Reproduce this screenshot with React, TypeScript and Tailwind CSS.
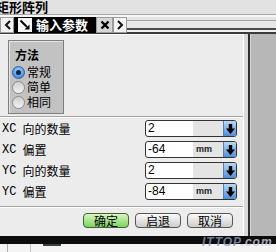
import React from 'react';

const cjk = "font-['Noto_Sans_CJK_SC','Noto_Sans',sans-serif]";

const rows = [
  { axis: 'XC', label: '向的数量', value: '2', unit: '' },
  { axis: 'XC', label: '偏置', value: '-64', unit: 'mm' },
  { axis: 'YC', label: '向的数量', value: '2', unit: '' },
  { axis: 'YC', label: '偏置', value: '-84', unit: 'mm' },
];

function DownArrow() {
  return (
    <svg width="9" height="10" viewBox="0 0 9 10">
      <path d="M2.8 0h3.4v4.6H9L4.5 10 0 4.6h2.8z" fill="#000" />
    </svg>
  );
}

function Radio({ checked, label }: { checked?: boolean; label: string }) {
  return (
    <div className="h-[15px] flex items-center pl-[3px]">
      {checked ? (
        <div className="w-[13px] h-[13px] rounded-full border border-[#2d5f99] bg-[radial-gradient(circle_at_50%_35%,#9fd0ff,#2f78d0)] flex items-center justify-center">
          <div className="w-[5px] h-[5px] rounded-full bg-[#0b2448]" />
        </div>
      ) : (
        <div className="w-[13px] h-[13px] rounded-full border border-[#8c8c8c] bg-[linear-gradient(#cfcfcf,#f2f2f2)]" />
      )}
      <span className="ml-[2px] text-[12px] leading-[14px] font-['Liberation_Sans','Noto_Sans_CJK_SC',sans-serif] text-black">
        {label}
      </span>
    </div>
  );
}

function ValueBox({ value, unit }: { value: string; unit: string }) {
  return (
    <div className="w-[92px] h-[17px] rounded-[3px] border border-[#333] bg-white flex overflow-hidden">
      <div className="w-[47px] pl-[2px] text-[12px] leading-[15px] font-['Liberation_Sans',sans-serif] text-black">{value}</div>
      <div className="w-[30px] bg-[#e4e4e4] flex items-center pl-[3px] text-[9px] font-bold font-['Liberation_Sans',sans-serif] text-[#222]">
        {unit}
      </div>
      <div className="w-[13px] border-l border-[#5a7fa8] bg-[linear-gradient(#b8d8f6,#4f8fd6)] flex items-center justify-center">
        <DownArrow />
      </div>
    </div>
  );
}

export default function App() {
  return (
    <div className={`w-[276px] h-[252px] bg-[#e2e2e2] overflow-hidden flex flex-col relative ${cjk}`}>
      {/* title */}
      <div className="h-[14px] flex items-center">
        <span className="-ml-[4px] text-[13px] leading-[14px] font-bold text-black">矩形阵列</span>
      </div>
      <div className="h-[3px] border-t border-[#a6a6a6] bg-[#f6f6f6]" />

      {/* tab row */}
      <div className="h-[16px] flex">
        <div className="w-[14px] bg-[#f2f2f2] border border-[#9a9a9a] flex items-center justify-center">
          <svg width="7" height="10" viewBox="0 0 7 10">
            <path d="M6 1L2 5l4 4" stroke="#111" strokeWidth="2" fill="none" />
          </svg>
        </div>
        <div className="w-[82px] bg-black flex items-center pl-[4px]">
          <div className="w-[14px] h-[14px] bg-[#f4f4f4] flex items-center justify-center">
            <svg width="12" height="12" viewBox="0 0 12 12">
              <path d="M1.5 1.5L8 8" stroke="#000" strokeWidth="2" />
              <path d="M5.5 10.5L10.5 10.5L10.5 5.5z" fill="#000" />
            </svg>
          </div>
          <span className="ml-[4px] text-[13px] leading-[14px] font-bold text-white">输入参数</span>
        </div>
        <div className="w-[17px] bg-[#d6d6d6] border border-[#9a9a9a] flex items-center justify-center">
          <svg width="10" height="10" viewBox="0 0 10 10">
            <path d="M1.5 1.5l7 7M8.5 1.5l-7 7" stroke="#000" strokeWidth="2.4" />
          </svg>
        </div>
        <div className="w-[14px] bg-[#f4f4f4] border border-[#9a9a9a] flex items-center justify-center">
          <svg width="7" height="10" viewBox="0 0 7 10">
            <path d="M1 1l4 4-4 4" stroke="#111" strokeWidth="2" fill="none" />
          </svg>
        </div>
        <div className="flex-1 bg-[linear-gradient(#e4e4e4_0px,#e4e4e4_3px,#a0a0a0_3px,#a0a0a0_4px,#e6e6e6_4px,#e6e6e6_11px,#4a4a4a_11px,#4a4a4a_13px,#f0f0f0_13px,#f0f0f0_15px,#3c3c3c_15px)]" />
      </div>
      <div className="h-[1px] bg-[#3c3c3c]" />

      {/* main */}
      <div className="h-[202px] flex">
        <div className="w-[250px] border-r-2 border-[#2e2e2e] flex">
          <div className="flex-1 border-t border-white bg-[#ececec] flex flex-col pt-[5px]">
            {/* group box */}
            <div className="ml-[8px] w-[56px] h-[74px] border border-[#7e7e7e] bg-[#c2c2c2] shadow-[inset_1px_1px_0_#e6e6e6] pt-[7px]">
              <div className="pl-[6px] text-[12px] leading-[13px] font-bold text-black">方法</div>
              <div className="mt-[4px]">
                <Radio checked label="常规" />
                <Radio label="简单" />
                <Radio label="相同" />
              </div>
            </div>
            <div className="mt-[2px] h-[2px] border-t border-[#a4a4a4] bg-white" />

            {/* rows */}
            <div className="mt-[2px] flex flex-col gap-[4px] pr-[6px]">
              {rows.map((r, i) => (
                <div key={i} className="h-[17px] flex items-center">
                  <span className="pl-[2px] text-[12px] font-['Liberation_Mono',monospace] text-black">{r.axis}</span>
                  <span className="ml-[6px] text-[12px] leading-[13px] text-black">{r.label}</span>
                  <div className="ml-auto">
                    <ValueBox value={r.value} unit={r.unit} />
                  </div>
                </div>
              ))}
            </div>

            <div className="mt-[6px] h-[2px] border-t border-[#a4a4a4] bg-white" />

            {/* buttons */}
            <div className="mt-[5px] flex justify-end gap-[6px] pr-[10px]">
              <button className="w-[46px] h-[15px] rounded-[4px] border border-[#44603c] bg-[linear-gradient(#d8f6c0,#7ed25e)] text-[12px] leading-[13px] text-black">
                确定
              </button>
              <button className="w-[46px] h-[15px] rounded-[4px] border border-[#555] bg-[linear-gradient(#fafafa,#cdcdcd)] text-[12px] leading-[13px] text-black">
                启退
              </button>
              <button className="w-[46px] h-[15px] rounded-[4px] border border-[#555] bg-[linear-gradient(#fafafa,#cdcdcd)] text-[12px] leading-[13px] text-black">
                取消
              </button>
            </div>
          </div>
          <div className="w-[5px] border-l border-white bg-[#dadada]" />
        </div>
        <div className="flex-1 bg-[#b7b7b7] border-l border-[#d8d8d8]" />
      </div>

      {/* bottom */}
      <div className="h-[8px] bg-[#0c0c0c]" />
      <div className="h-[8px] bg-[#f4f4f4] flex">
        <div className="ml-[7px] w-[1px] bg-[#b0b0b0]" />
        <div className="ml-[22px] w-[1px] bg-[#c4c4c4]" />
        <div className="ml-[12px] w-[18px] h-[2px] bg-[#334433]" />
      </div>

      {/* watermark */}
      <div className="absolute left-[202px] top-[236px] text-[12px] leading-[13px] italic font-bold tracking-[1px] font-['Liberation_Sans',sans-serif] text-[#8a98b8] opacity-80">
        ITTOP<span className="text-[#c8d0e0]">.com</span>
      </div>
    </div>
  );
}
